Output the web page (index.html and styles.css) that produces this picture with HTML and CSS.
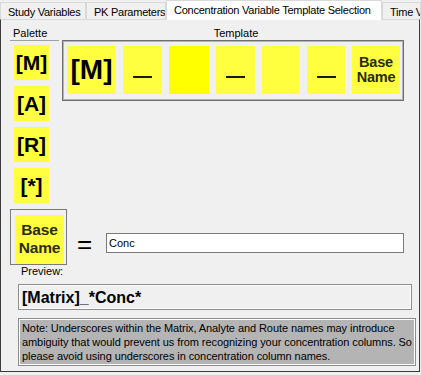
FILE: index.html
```html
<!DOCTYPE html>
<html lang="en">
<head>
  <meta charset="UTF-8" />
  <title>Concentration Variable Template Selection</title>
  <link rel="stylesheet" href="styles.css">
</head>
<body>
  <div class="tabs">
    <div class="tab tab-study">Study Variables</div>
    <div class="tab tab-pk">PK Parameters</div>
    <div class="tab tab-active">Concentration Variable Template Selection</div>
    <div class="tab tab-time">Time V</div>
  </div>

  <div class="page">
    <div class="main">
      <div class="palette">
        <div class="caption palette-caption">Palette</div>
        <div class="palette-list">
          <div class="chip">[M]</div>
          <div class="chip">[A]</div>
          <div class="chip">[R]</div>
          <div class="chip">[*]</div>
        </div>
      </div>

      <div class="template">
        <div class="caption template-caption">Template</div>
        <div class="template-box">
          <div class="cell cell-m">[M]</div>
          <div class="cell cell-dash w39"><span>_</span></div>
          <div class="cell cell-bright"></div>
          <div class="cell cell-dash w39"><span>_</span></div>
          <div class="cell w38"></div>
          <div class="cell cell-dash w38"><span>_</span></div>
          <div class="cell cell-name">Base<br>Name</div>
        </div>
      </div>
    </div>

    <div class="base-row">
      <div class="base-box">
        <div class="base-inner">Base<br>Name</div>
      </div>
      <div class="equals">=</div>
      <input class="base-input" type="text" value="Conc">
    </div>

    <div class="caption preview-caption">Preview:</div>
    <div class="preview">[Matrix]_*Conc*</div>

    <div class="note">Note: Underscores within the Matrix, Analyte and Route names may introduce ambiguity that would prevent us from recognizing your concentration columns. So please avoid using underscores in concentration column names.</div>
  </div>
</body>
</html>
```

FILE: styles.css
```css
body {
  margin: 0;
  width: 421px;
  height: 375px;
  background-color: #f0f0f0;
  font-family: 'Liberation Sans', Arial, sans-serif;
  font-size: 11px;
  color: #000000;
  overflow: hidden;
}

/* tab strip */
.tabs {
  display: flex;
  align-items: flex-end;
  height: 19px;
}
.tab {
  box-sizing: border-box;
  height: 17px;
  padding: 3px 0 0 7px;
  background-color: #f0f0f0;
  border: 1px solid #d9d9d9;
  border-bottom: none;
  white-space: nowrap;
  overflow: hidden;
  font-size: 11px;
  letter-spacing: -0.25px;
}
.tab-study { width: 86px; }
.tab-pk { width: 80px; }
.tab-active {
  width: 216px;
  height: 20px;
  margin-bottom: -1px;
  padding-top: 3px;
  background-color: #ffffff;
  position: relative;
}
.tab-time { flex: 1; }

/* tab page */
.page {
  box-sizing: border-box;
  width: 420px;
  height: 353px;
  border: 1px solid #3c3c3c;
  border-top: 1px solid #d9d9d9;
}
.caption {
  line-height: 13px;
  height: 13px;
}

.main {
  display: flex;
  align-items: flex-start;
  padding: 7px 0 0 9px;
}
.palette {
  width: 49px;
}
.palette-caption {
  padding-left: 3px;
}
.palette-list {
  border-top: 1px solid #a0a0a0;
  padding: 4px 0 0 4px;
  display: flex;
  flex-direction: column;
  gap: 6px;
}
.chip {
  width: 35px;
  height: 35px;
  background-color: #ffff40;
  font-weight: 700;
  font-size: 21px;
  display: flex;
  align-items: center;
  justify-content: center;
}

.template {
  margin-left: 3px;
  width: 342px;
}
.template-caption {
  text-align: center;
  padding-left: 6px;
}
.template-box {
  box-sizing: border-box;
  height: 61px;
  border: 1px solid #6e6e6e;
  box-shadow: inset 0 0 0 1px #b4b4b4;
  padding: 5px 0 0 4px;
  display: flex;
  gap: 7px;
}
.cell {
  width: 40px;
  height: 48px;
  background-color: #ffff40;
  display: flex;
  align-items: center;
  justify-content: center;
}
.w39 { width: 39px; }
.w38 { width: 38px; }
.cell-m {
  width: 49px;
  font-weight: 700;
  font-size: 28px;
}
.cell-bright {
  background-color: #ffff00;
}
.cell-dash {
  align-items: flex-start;
}
.cell-dash span {
  display: block;
  margin-top: 30px;
  width: 19px;
  height: 2px;
  background-color: #1a1a1a;
  overflow: hidden;
  color: transparent;
  font-size: 2px;
}
.cell-name {
  width: 48px;
  font-weight: 700;
  font-size: 14.5px;
  line-height: 15px;
  letter-spacing: -0.2px;
  color: #2b2b10;
  text-align: center;
}

/* base name row */
.base-row {
  display: flex;
  align-items: flex-start;
  margin-top: 6px;
  padding-left: 9px;
}
.base-box {
  box-sizing: border-box;
  width: 57px;
  height: 56px;
  border: 1px solid #7a7a7a;
  padding: 5px 2px 0 4px;
}
.base-inner {
  height: 49px;
  background-color: #ffff40;
  font-weight: 700;
  font-size: 15.5px;
  line-height: 18px;
  letter-spacing: -0.2px;
  color: #2b2b10;
  text-align: center;
  padding-top: 6px;
  box-sizing: border-box;
}
.equals {
  margin: 20px 0 0 10px;
  width: 16px;
  font-size: 26px;
  line-height: 30px;
}
.base-input {
  box-sizing: border-box;
  margin: 24px 0 0 13px;
  width: 298px;
  height: 20px;
  border: 1px solid #7a7a7a;
  padding: 0 2px;
  font-family: 'Liberation Sans', Arial, sans-serif;
  font-size: 11px;
  background-color: #ffffff;
}

/* preview + note */
.preview-caption {
  padding-left: 20px;
}
.preview {
  box-sizing: border-box;
  margin: 6px 0 0 17px;
  width: 394px;
  height: 26px;
  border: 1px solid #8c8c8c;
  box-shadow: inset 0 0 0 1px #ffffff;
  padding: 3px 0 0 3px;
  font-weight: 700;
  font-size: 16px;
  line-height: 19px;
}
.note {
  box-sizing: border-box;
  margin: 8px 0 0 17px;
  width: 398px;
  height: 48px;
  border: 1px solid #8c8c8c;
  box-shadow: inset 0 0 0 1px #ffffff;
  background-color: #b4b4b4;
  padding: 2px 1px 2px 3px;
  font-size: 11px;
  line-height: 14px;
  letter-spacing: -0.08px;
}
```
